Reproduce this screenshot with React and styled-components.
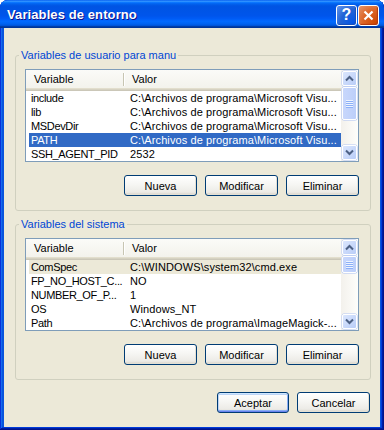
import React from 'react'
import styled, { createGlobalStyle } from 'styled-components'

const GlobalStyle = createGlobalStyle`
  html, body {
    margin: 0;
    padding: 0;
    background: #ffffff;
  }
  body {
    font-family: "Liberation Sans", Arial, sans-serif;
    font-size: 11px;
    color: #000;
  }
`

const Window = styled.div`
  width: 384px;
  height: 430px;
  box-sizing: border-box;
  display: flex;
  flex-direction: column;
  background: #0855dd;
  border-radius: 8px 8px 0 0;
  overflow: hidden;
  box-shadow: inset -1px -1px #00138c, inset 1px 1px #0831d9,
    inset -2px -2px #001ea0, inset 2px 2px #166aee, inset -3px -3px #003bda,
    inset 3px 3px #0855dd;
`

const TitleBar = styled.div`
  height: 28px;
  flex: none;
  display: flex;
  align-items: center;
  padding: 0 5px 0 7px;
  background: linear-gradient(
    180deg,
    #0058ee 0%,
    #3593ff 4%,
    #288eff 6%,
    #127dff 8%,
    #036ffc 10%,
    #0262ee 14%,
    #0057e5 20%,
    #0054e3 24%,
    #0055eb 56%,
    #005bf5 66%,
    #026afe 76%,
    #0062ef 86%,
    #0052d6 92%,
    #0040ab 94%,
    #003092 100%
  );
`

const Title = styled.div`
  flex: 1;
  color: #fff;
  font-weight: bold;
  font-size: 13px;
  letter-spacing: 0.1px;
  text-shadow: 1px 1px #0f1089;
`

const CaptionButtons = styled.div`
  display: flex;
  gap: 1px;
  margin-top: 2px;
`

const CaptionButton = styled.div`
  width: 21px;
  height: 21px;
  box-sizing: border-box;
  border: 1px solid #fff;
  border-radius: 3px;
  display: flex;
  align-items: center;
  justify-content: center;
  color: #fff;
  font-weight: bold;
  font-size: 16px;
  background: ${(p) =>
    p.$close
      ? 'radial-gradient(circle at 90% 90%, #cc4600 0%, #dc6527 55%, #e5976f 100%)'
      : 'radial-gradient(circle at 90% 90%, #0054e9 0%, #2263d5 55%, #6696eb 100%)'};
  box-shadow: inset -1px -1px 1px ${(p) => (p.$close ? '#b03a10' : '#1a4fb8')};
`

const Client = styled.div`
  flex: 1;
  margin: 0 4px 3px 4px;
  background: #ece9d8;
  display: flex;
  flex-direction: column;
  padding: 21px 9px 0 11px;
`

const Group = styled.fieldset`
  margin: 0 0 7px 0;
  min-width: 0;
  border: 1px solid #d0d0bf;
  border-radius: 3px;
  padding: 7px 11px 14px 4px;
`

const Legend = styled.legend`
  padding: 0 2px;
  margin-left: -1px;
  line-height: 13px;
  height: 13px;
  color: #0046d5;
`

const GroupBody = styled.div`
  padding-left: 5px;
  display: flex;
  flex-direction: column;
`

const ListView = styled.div`
  height: 93px;
  box-sizing: border-box;
  border: 1px solid #7f9db9;
  background: #fff;
  display: flex;
  overflow: hidden;
`

const Columns = styled.div`
  flex: 1;
  min-width: 0;
  display: flex;
  flex-direction: column;
`

const Header = styled.div`
  height: 21px;
  flex: none;
  box-sizing: border-box;
  display: flex;
  align-items: center;
  background: linear-gradient(#fbfbf8, #f2f1ea);
  box-shadow: inset 0 -1px #cbc7b8, inset 0 -2px #d6d2c2, inset 0 -3px #e2decd;
  padding-bottom: 2px;
`

const HeaderCell = styled.div`
  box-sizing: border-box;
  padding-left: 8px;
  width: ${(p) => (p.$first ? '98px' : 'auto')};
  flex: ${(p) => (p.$first ? 'none' : '1')};
  height: 13px;
  line-height: 13px;
  border-right: ${(p) => (p.$first ? '1px solid #c7c5b2' : 'none')};
  box-shadow: ${(p) => (p.$first ? '1px 0 #fff' : 'none')};
`

const Row = styled.div`
  display: flex;
  height: 14px;
  line-height: 14px;
  margin-left: 3px;
  flex: none;
  background: ${(p) =>
    p.$state === 'active' ? '#316ac5' : p.$state === 'inactive' ? '#ece9d8' : 'transparent'};
  color: ${(p) => (p.$state === 'active' ? '#fff' : '#000')};
`

const Cell = styled.div`
  box-sizing: border-box;
  white-space: nowrap;
  overflow: hidden;
  text-overflow: clip;
  width: ${(p) => (p.$first ? '95px' : 'auto')};
  flex: ${(p) => (p.$first ? 'none' : '1')};
  min-width: 0;
  padding-left: ${(p) => (p.$first ? '2px' : '6px')};
  letter-spacing: ${(p) => (p.$first ? '-0.35px' : '0.1px')};
`

const ScrollBar = styled.div`
  width: 17px;
  flex: none;
  display: flex;
  flex-direction: column;
  background: linear-gradient(to right, #f3f1ec, #fefefb);
  padding: 1px 0 1px 1px;
  box-sizing: border-box;
`

const ScrollButton = styled.div`
  height: 15px;
  width: 15px;
  flex: none;
  box-sizing: border-box;
  border: 1px solid #fff;
  border-radius: 2px;
  background: linear-gradient(135deg, #dbe6fd, #b9cdf8);
  box-shadow: 0 0 0 0.5px #b3c6f3;
  display: flex;
  align-items: center;
  justify-content: center;
`

const Track = styled.div`
  flex: 1;
  padding: 1px 0;
  display: flex;
  flex-direction: column;
`

const Thumb = styled.div`
  width: 15px;
  box-sizing: border-box;
  border: 1px solid #fff;
  border-radius: 2px;
  background: linear-gradient(to right, #c8d7fc, #bccffa);
  box-shadow: 0 0 0 0.5px #a9bff3;
  display: flex;
  flex-direction: column;
  align-items: center;
  justify-content: center;
  gap: 1px;
`

const Grip = styled.div`
  width: 7px;
  height: 1px;
  background: #eef4fe;
  box-shadow: 0 1px #8cb0f8;
`

const ButtonRow = styled.div`
  display: flex;
  justify-content: flex-end;
  gap: 8px;
  margin-top: ${(p) => p.$top || '13px'};
  padding-right: ${(p) => p.$right || '0'};
`

const Button = styled.button`
  width: ${(p) => p.$w || '73px'};
  height: 21px;
  box-sizing: border-box;
  border: 1px solid #003c74;
  border-radius: 3px;
  padding: 0;
  font-family: "Liberation Sans", Arial, sans-serif;
  font-size: 11px;
  color: #000;
  background: linear-gradient(180deg, #ffffff 0%, #f6f6f3 45%, #ecebe6 85%, #d6d0c5 100%);
  box-shadow: ${(p) =>
    p.$default
      ? 'inset 0 1px #cee7ff, inset 0 -1px #6982ee, inset 1px 0 #bcd4f6, inset -1px 0 #89adf4, inset 0 2px #bcd4f6, inset 0 -2px #89adf4'
      : 'inset -1px -1px #e3e0d4'};
`

const Chevron = ({ down }) => (
  <svg width="9" height="7" viewBox="0 0 9 7">
    <path
      d={down ? 'M1 1.5 L4.5 5 L8 1.5' : 'M1 5.5 L4.5 2 L8 5.5'}
      fill="none"
      stroke="#4d6185"
      strokeWidth="2"
    />
  </svg>
)

const Scroller = ({ thumb }) => (
  <ScrollBar>
    <ScrollButton>
      <Chevron />
    </ScrollButton>
    <Track>
      <Thumb style={{ height: thumb }}>
        <Grip />
        <Grip />
        <Grip />
        <Grip />
      </Thumb>
    </Track>
    <ScrollButton>
      <Chevron down />
    </ScrollButton>
  </ScrollBar>
)

const List = ({ rows, thumb }) => (
  <ListView>
    <Columns>
      <Header>
        <HeaderCell $first>Variable</HeaderCell>
        <HeaderCell>Valor</HeaderCell>
      </Header>
      {rows.map((r) => (
        <Row key={r.name} $state={r.state}>
          <Cell $first>{r.name}</Cell>
          <Cell>{r.value}</Cell>
        </Row>
      ))}
    </Columns>
    <Scroller thumb={thumb} />
  </ListView>
)

const userVars = [
  { name: 'include', value: 'C:\\Archivos de programa\\Microsoft Visu...' },
  { name: 'lib', value: 'C:\\Archivos de programa\\Microsoft Visu...' },
  { name: 'MSDevDir', value: 'C:\\Archivos de programa\\Microsoft Visu...' },
  { name: 'PATH', value: 'C:\\Archivos de programa\\Microsoft Visu...', state: 'active' },
  { name: 'SSH_AGENT_PID', value: '2532' },
]

const systemVars = [
  { name: 'ComSpec', value: 'C:\\WINDOWS\\system32\\cmd.exe', state: 'inactive' },
  { name: 'FP_NO_HOST_C...', value: 'NO' },
  { name: 'NUMBER_OF_P...', value: '1' },
  { name: 'OS', value: 'Windows_NT' },
  { name: 'Path', value: 'C:\\Archivos de programa\\ImageMagick-...' },
]

export default function App() {
  return (
    <>
      <GlobalStyle />
      <Window>
        <TitleBar>
          <Title>Variables de entorno</Title>
          <CaptionButtons>
            <CaptionButton>?</CaptionButton>
            <CaptionButton $close>
              <svg width="11" height="11" viewBox="0 0 11 11">
                <path d="M1.5 1.5 L9.5 9.5 M9.5 1.5 L1.5 9.5" stroke="#fff" strokeWidth="2.2" />
              </svg>
            </CaptionButton>
          </CaptionButtons>
        </TitleBar>
        <Client>
          <Group>
            <Legend>Variables de usuario para manu</Legend>
            <GroupBody>
              <List rows={userVars} thumb={33} />
              <ButtonRow>
                <Button>Nueva</Button>
                <Button>Modificar</Button>
                <Button>Eliminar</Button>
              </ButtonRow>
            </GroupBody>
          </Group>
          <Group>
            <Legend>Variables del sistema</Legend>
            <GroupBody>
              <List rows={systemVars} thumb={17} />
              <ButtonRow>
                <Button>Nueva</Button>
                <Button>Modificar</Button>
                <Button>Eliminar</Button>
              </ButtonRow>
            </GroupBody>
          </Group>
          <ButtonRow $top="5px" $right="1px">
            <Button $w="72px" $default>
              Aceptar
            </Button>
            <Button>Cancelar</Button>
          </ButtonRow>
        </Client>
      </Window>
    </>
  )
}
